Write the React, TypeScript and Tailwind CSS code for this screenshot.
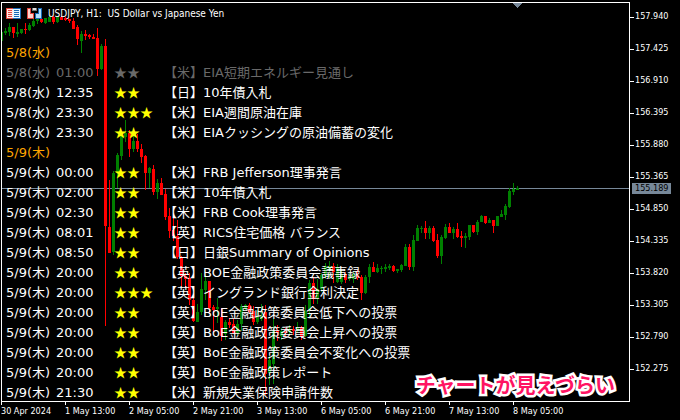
import React from 'react';

interface EconomicEvent {
  time: string;
  stars: number;
  country: string;
  title: string;
  past?: boolean;
}

interface EventDay {
  label: string;
  events: EconomicEvent[];
}

const days: EventDay[] = [
  {
    label: '5/8(水)',
    events: [
      { time: '01:00', stars: 2, country: '米', title: 'EIA短期エネルギー見通し', past: true },
      { time: '12:35', stars: 2, country: '日', title: '10年債入札' },
      { time: '23:30', stars: 3, country: '米', title: 'EIA週間原油在庫' },
      { time: '23:30', stars: 2, country: '米', title: 'EIAクッシングの原油備蓄の変化' },
    ],
  },
  {
    label: '5/9(木)',
    events: [
      { time: '00:00', stars: 2, country: '米', title: 'FRB Jefferson理事発言' },
      { time: '02:00', stars: 2, country: '米', title: '10年債入札' },
      { time: '02:30', stars: 2, country: '米', title: 'FRB Cook理事発言' },
      { time: '08:01', stars: 2, country: '英', title: 'RICS住宅価格 バランス' },
      { time: '08:50', stars: 2, country: '日', title: '日銀Summary of Opinions' },
      { time: '20:00', stars: 2, country: '英', title: 'BOE金融政策委員会議事録' },
      { time: '20:00', stars: 3, country: '英', title: 'イングランド銀行金利決定' },
      { time: '20:00', stars: 2, country: '英', title: 'BoE金融政策委員会低下への投票' },
      { time: '20:00', stars: 2, country: '英', title: 'BoE金融政策委員会上昇への投票' },
      { time: '20:00', stars: 2, country: '英', title: 'BoE金融政策委員会不変化への投票' },
      { time: '20:00', stars: 2, country: '英', title: 'BoE金融政策レポート' },
      { time: '21:30', stars: 2, country: '米', title: '新規失業保険申請件数' },
    ],
  },
];

const prices = [
  '157.940', '157.425', '156.910', '156.395', '155.880', '155.365',
  '154.850', '154.335', '153.820', '153.305', '152.790', '152.275',
];

const times = [
  '30 Apr 2024', '1 May 13:00', '2 May 05:00', '2 May 21:00', '3 May 13:00',
  '6 May 05:00', '6 May 21:00', '7 May 13:00', '8 May 05:00',
];

// high, body top, body bottom, low, bullish
type Candle = [number, number, number, number, 0 | 1];

const candles: Candle[] = [
  [32, 32, 41, 41, 1], [28, 31, 33, 35, 1], [23, 27, 32, 36, 1], [27, 27, 33, 38, 0],
  [23, 32, 34, 37, 1], [29, 29, 33, 34, 1], [23, 29, 30, 34, 0], [23, 25, 30, 31, 1],
  [19, 21, 26, 27, 1], [16, 19, 21, 24, 1], [18, 19, 22, 23, 0], [18, 18, 23, 24, 1],
  [16, 17, 22, 22, 1], [16, 17, 22, 24, 0], [16, 17, 22, 23, 1], [16, 17, 20, 20, 0],
  [17, 18, 20, 21, 0], [19, 19, 21, 23, 0], [18, 21, 29, 29, 0], [25, 27, 39, 45, 0],
  [31, 34, 41, 53, 1], [30, 34, 36, 40, 0], [34, 35, 37, 39, 0], [34, 37, 39, 39, 0],
  [28, 38, 69, 76, 0], [44, 46, 69, 70, 1], [39, 46, 226, 326, 0], [180, 227, 253, 253, 0],
  [171, 173, 252, 255, 1], [153, 155, 173, 188, 1], [135, 136, 156, 160, 1], [120, 133, 137, 142, 1],
  [130, 133, 149, 157, 0], [132, 141, 149, 152, 1], [134, 141, 149, 152, 0], [144, 149, 157, 163, 0],
  [155, 156, 173, 190, 0], [167, 168, 173, 188, 1], [165, 169, 192, 195, 0], [179, 183, 192, 199, 1],
  [178, 183, 195, 195, 0], [189, 194, 217, 220, 0], [208, 216, 231, 238, 0], [213, 230, 236, 241, 0],
  [220, 236, 257, 259, 0], [256, 257, 276, 287, 0], [273, 276, 279, 288, 0], [273, 278, 300, 305, 0],
  [298, 300, 321, 322, 0], [304, 312, 322, 322, 1], [273, 289, 312, 315, 1], [275, 281, 290, 300, 1],
  [281, 281, 308, 314, 0], [305, 307, 310, 332, 0], [298, 307, 309, 323, 1], [308, 317, 336, 341, 0],
  [320, 322, 334, 340, 1], [318, 322, 325, 328, 0], [319, 324, 333, 334, 0], [320, 324, 333, 335, 1],
  [304, 306, 324, 331, 1], [304, 305, 308, 310, 1], [303, 305, 312, 314, 0], [306, 311, 322, 325, 0],
  [310, 316, 322, 324, 1], [304, 316, 319, 321, 1], [305, 312, 374, 395, 0], [356, 360, 373, 385, 1],
  [319, 331, 364, 384, 1], [325, 331, 333, 341, 0], [328, 331, 336, 340, 1], [328, 331, 333, 336, 0],
  [325, 329, 332, 334, 1], [326, 329, 331, 335, 0], [322, 327, 331, 333, 1], [326, 328, 337, 340, 0],
  [305, 311, 336, 337, 1], [280, 283, 310, 318, 1], [277, 283, 299, 304, 0], [279, 289, 298, 304, 1],
  [273, 275, 289, 292, 1], [263, 266, 276, 279, 1], [261, 266, 270, 278, 1], [263, 266, 272, 283, 0],
  [264, 267, 282, 283, 1], [270, 274, 282, 284, 1], [272, 274, 280, 283, 0], [273, 276, 279, 281, 1],
  [271, 274, 279, 283, 1], [270, 275, 278, 280, 0], [275, 277, 293, 300, 0], [275, 277, 293, 294, 1],
  [264, 267, 277, 283, 1], [262, 267, 272, 272, 0], [264, 268, 272, 273, 1], [266, 268, 269, 274, 1],
  [264, 267, 269, 272, 1], [264, 266, 268, 270, 1], [265, 266, 271, 272, 0], [269, 269, 271, 273, 1],
  [264, 265, 270, 272, 1], [244, 247, 266, 266, 1], [244, 247, 267, 270, 0], [235, 240, 267, 271, 1],
  [225, 228, 241, 241, 1], [226, 228, 229, 233, 1], [221, 228, 233, 239, 0], [226, 228, 233, 239, 1],
  [226, 228, 241, 242, 0], [234, 240, 256, 258, 0], [235, 237, 256, 264, 1], [224, 227, 238, 239, 1],
  [223, 227, 233, 233, 0], [227, 229, 233, 239, 1], [223, 229, 237, 238, 0], [231, 236, 238, 247, 0],
  [233, 236, 238, 248, 1], [225, 225, 237, 240, 1], [225, 225, 232, 233, 0], [220, 222, 232, 235, 1],
  [215, 216, 222, 222, 1], [216, 216, 223, 224, 0], [218, 220, 223, 223, 1], [220, 220, 226, 233, 0],
  [216, 216, 226, 226, 1], [210, 214, 217, 217, 1], [204, 206, 215, 220, 1], [188, 191, 207, 208, 1],
  [183, 189, 192, 195, 1], [186, 188, 190, 190, 1],
];

function CandleChart() {
  return (
    <svg className="absolute inset-0 h-full w-full" shapeRendering="crispEdges" aria-hidden="true">
      <rect x="0" y="185" width="100%" height="1" fill="#778899" />
      <g transform="translate(-2 -3)">
        {candles.map(([high, top, bottom, low, up], i) => {
          const x = 1 + i * 4;
          return (
            <g key={i} fill={up ? '#008000' : '#ff0000'}>
              <rect x={x} y={high} width="1" height={low - high} />
              <rect x={x - 1} y={top} width="3" height={bottom - top} />
            </g>
          );
        })}
        <path d="M513 3h9v1h-1v1h-1v1h-1v1h-1v1h-1v-1h-1v-1h-1v-1h-1v-1h-1z" fill="#778899" />
      </g>
    </svg>
  );
}

function QuotesIcon() {
  return (
    <svg width="15" height="11" viewBox="0 0 15 11" shapeRendering="crispEdges" aria-hidden="true">
      <path d="M0 0h8v11H0z" fill="#e0443e" />
      <path d="M1 1h6v9H1z" fill="#ffe9e6" />
      <path d="M2 2h4v1H2zM2 4h4v1H2zM2 6h4v1H2zM2 8h4v1H2z" fill="#e0443e" />
      <path d="M7 0h8v11H7z" fill="#1769b5" />
      <path d="M7 1h7v9H7z" fill="#e6f4ff" />
      <path d="M8 2h5v1H8zM8 4h5v1H8zM8 6h5v1H8zM8 8h5v1H8z" fill="#1769b5" />
    </svg>
  );
}

function TradeIcon() {
  return (
    <svg width="15" height="11" viewBox="0 0 15 11" shapeRendering="crispEdges" aria-hidden="true">
      <path d="M0 0h4v5h3v6H0z" fill="#e0443e" />
      <path d="M1 1h2v5h3v4H1z" fill="#ffd2cc" />
      <path d="M11 0h4v11H8V5h3z" fill="#1769b5" />
      <path d="M12 1h2v9H9V6h3z" fill="#b5defa" />
      <path d="M5 0h5v3H5z" fill="#777" />
      <path d="M6 0h3v2H6z" fill="#ddd" />
    </svg>
  );
}

function EventTable() {
  return (
    <table className="relative -mb-0.5 border-collapse whitespace-nowrap text-left font-['DejaVu_Sans','Noto_Sans_CJK_JP',sans-serif] text-[13px] leading-5 text-white">
      {days.map((day) => (
        <tbody key={day.label}>
          <tr className="h-5">
            <th colSpan={4} scope="rowgroup" className="p-0 pl-1 font-normal text-[#ffa500]">
              {day.label}
            </th>
          </tr>
          {day.events.map((event, i) => (
            <tr key={i} className={event.past ? 'h-5 text-[#696969]' : 'h-5'}>
              <td className="w-[54px] p-0 pl-1">{day.label}</td>
              <td className="w-[58px] p-0">{event.time}</td>
              <td
                className={
                  event.past
                    ? "w-[50px] p-0 align-top font-['Noto_Sans_CJK_JP',sans-serif] leading-[18px]"
                    : "w-[50px] p-0 align-top font-['Noto_Sans_CJK_JP',sans-serif] leading-[18px] text-[#ffff00]"
                }
              >
                {'★'.repeat(event.stars)}
              </td>
              <td className="p-0">
                【{event.country}】{event.title}
              </td>
            </tr>
          ))}
        </tbody>
      ))}
    </table>
  );
}

function PriceAxis() {
  return (
    <aside className="relative w-[50px] shrink-0">
      <ul>
        {prices.map((price) => (
          <li key={price} className="flex h-8 items-center gap-px">
            <span className="h-px w-1 bg-white" />
            {price}
          </li>
        ))}
      </ul>
      <span className="absolute left-0.5 top-[182px] h-[11px] w-[39px] bg-[#778899] pl-[3px] leading-[11px] text-black">
        155.189
      </span>
    </aside>
  );
}

export default function App() {
  return (
    <main className="min-h-screen overflow-hidden bg-black pl-px pt-px font-['DejaVu_Sans_Condensed','DejaVu_Sans',sans-serif] text-[9px] text-white">
      <div className="flex items-start">
        <section className="relative mt-px min-w-0 grow overflow-hidden border border-white">
          <CandleChart />
          <header className="relative flex h-10 items-start gap-1.5 pl-1 pt-[5px]">
            <QuotesIcon />
            <TradeIcon />
            <h1 className="whitespace-pre text-[10px] leading-[11px]">USDJPY, H1:  US Dollar vs Japanese Yen</h1>
          </header>
          <EventTable />
          <p className="absolute bottom-0 right-3.5 whitespace-nowrap font-['Noto_Sans_CJK_JP',sans-serif] text-xl font-bold leading-8 text-[#ff1463] [-webkit-text-stroke:5px_white] [paint-order:stroke_fill] [stroke-linejoin:round]">
            チャートが見えづらい
          </p>
        </section>
        <PriceAxis />
      </div>
      <ul className="flex">
        {times.map((time) => (
          <li key={time} className="w-16 shrink-0 whitespace-nowrap">
            <span className="block h-[3px] w-px bg-white" />
            <span className="block leading-3">{time}</span>
          </li>
        ))}
      </ul>
    </main>
  );
}
